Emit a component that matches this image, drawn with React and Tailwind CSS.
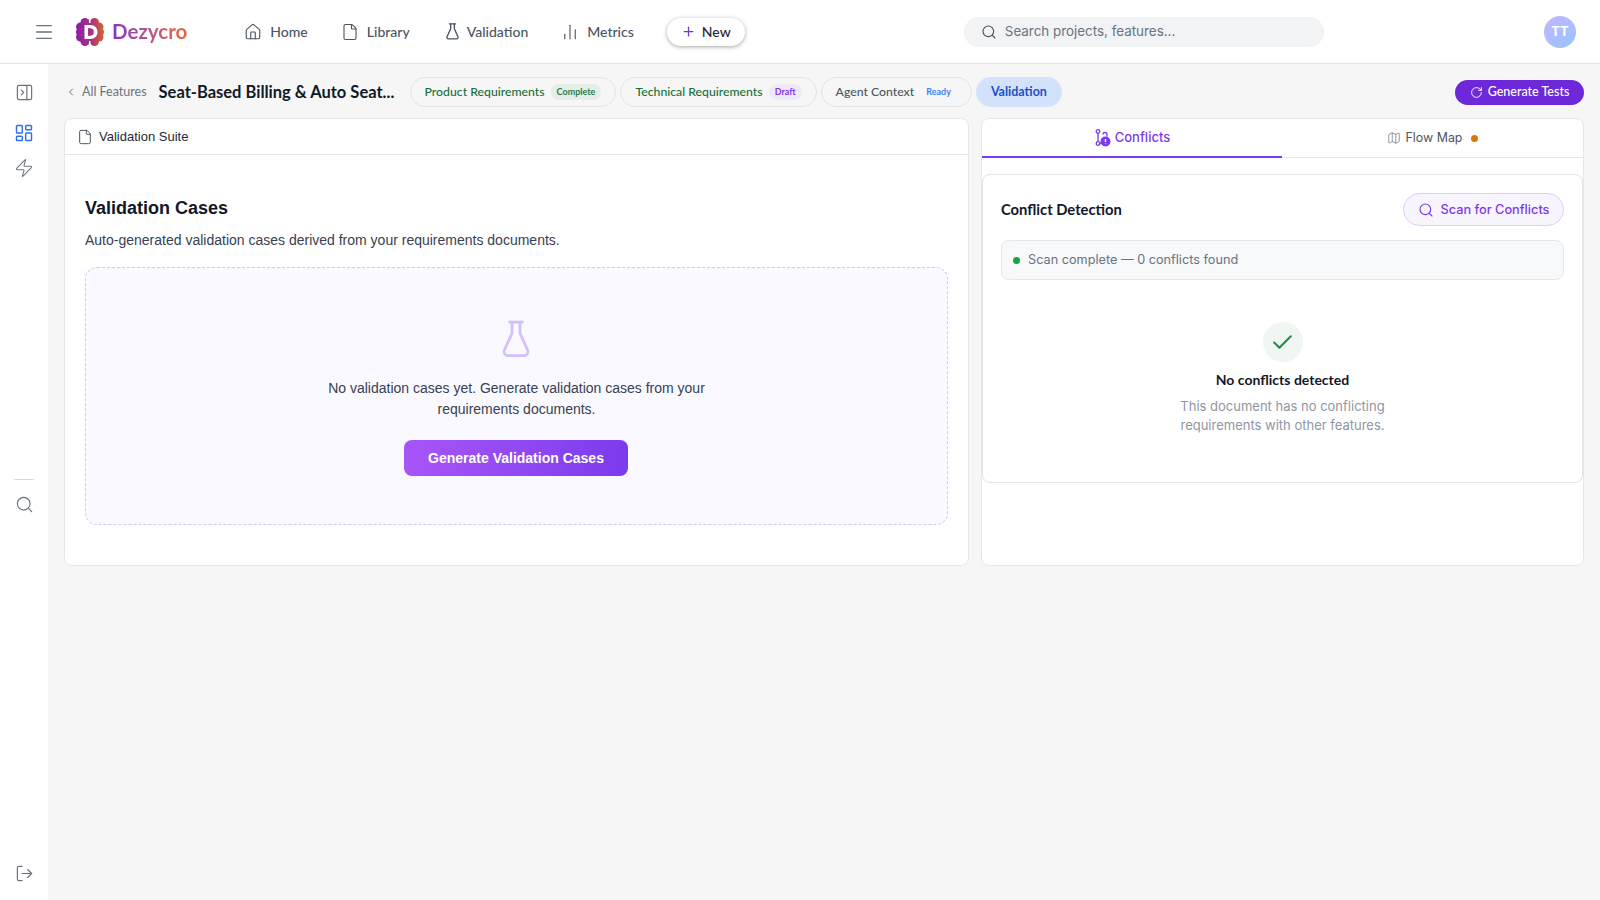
import {
  Menu, House, File, ChartNoAxesColumn, Plus, Search, ChevronLeft, RotateCw,
  PanelRightClose, LayoutDashboard, Zap, LogOut, Map as MapIcon, Check,
} from 'lucide-react';

const JOST = "font-['Lato','Liberation_Sans',sans-serif]";
const DM = "font-['Inter','Liberation_Sans',sans-serif]";
const ARIAL = "font-['Liberation_Sans',Arial,sans-serif]";

const LOBES = [
  [9, 4.500, 4.500], [18.500, 4.500, 4.500], [4.500, 9, 4.500], [23, 9, 4.500], [3.500, 14, 3.500],
  [24.500, 14, 3.500], [4.500, 19, 4.500], [23, 19, 4.500], [9, 23.500, 4.500], [18.500, 23.500, 4.500], [14, 14, 11],
];

function Logo() {
  return (
    <svg width="28" height="28" viewBox="0 0 28 28" className="shrink-0">
      <defs>
        <linearGradient id="lg" gradientUnits="userSpaceOnUse" x1="0" y1="0" x2="28" y2="0">
          <stop offset="0" stopColor="#8a1fa8" />
          <stop offset="0.55" stopColor="#a8347f" />
          <stop offset="1" stopColor="#d9642c" />
        </linearGradient>
      </defs>
      {LOBES.map(([cx, cy, r]) => (
        <circle key={`${cx}-${cy}`} cx={cx} cy={cy} r={r} fill="url(#lg)" />
      ))}
      <path d="M13.750 0v5M13.750 23v5" stroke="#fff" strokeWidth="1.500" />
      <path fill="#fff" d="M8.500 7h6c4.200 0 7 2.900 7 7s-2.800 7-7 7h-6zm3.500 3.200v7.600h2.300c2.200 0 3.600-1.600 3.600-3.800s-1.400-3.800-3.600-3.800z" />
    </svg>
  );
}

function FlaskIcon({ width, height, strokeWidth, className }) {
  return (
    <svg width={width} height={height} viewBox="0 0 28 38" fill="none" stroke="currentColor" strokeWidth={strokeWidth} strokeLinecap="round" strokeLinejoin="round" preserveAspectRatio="none" className={className}>
      <path d="M18 2v10.500c0 .6.1 1.100.4 1.600l7.200 15.900c1 2.400-.4 5.500-3.200 5.500H5.600c-2.800 0-4.200-3.100-3.200-5.500l7.200-15.900c.3-.5.4-1 .4-1.600V2" />
      <path d="M7.500 2h13" />
    </svg>
  );
}

function ConflictIcon() {
  return (
    <svg width="16" height="18" viewBox="0 0 16 18" fill="none" stroke="#7c3aed" strokeWidth="1.300" className="shrink-0">
      <circle cx="3" cy="2.500" r="1.800" />
      <circle cx="3" cy="14.500" r="1.800" />
      <path d="M3 4.500v8" />
      <path d="M8 5.500a2 2 0 0 1 4 0v2" />
      <path d="M5 14.500c1 0 2-.5 2-2v-3" />
      <circle cx="10.500" cy="12.500" r="5" fill="#7c3aed" stroke="none" />
      <path d="M10.500 10v3M10.500 14.500v.5" stroke="#fff" strokeWidth="1.400" />
    </svg>
  );
}

function NavItem({ icon, label, className }) {
  return (
    <div className={`flex items-center gap-2 text-[#4b5563] ${className}`}>
      {icon}
      <span className={`${JOST} text-[14px] font-medium`}>{label}</span>
    </div>
  );
}

function Pill({ label, tag, tagClass, labelClass }) {
  return (
    <div className="flex h-[30px] items-center gap-[6px] rounded-full border border-[#e2e2e4] pl-[14px] pr-[14px]">
      <span className={`${JOST} text-[12.250px] font-medium ${labelClass}`}>{label}</span>
      <span className={`${JOST} rounded-full px-[6px] py-[1px] text-[9px] font-bold ${tagClass}`}>{tag}</span>
    </div>
  );
}

function Header() {
  return (
    <header className="flex h-[64px] shrink-0 items-center border-b border-[#e2e2e2] bg-white">
      <Menu size={22} strokeWidth={1.500} className="ml-[33px] text-[#6b7280]" />
      <div className="ml-[21px] flex items-center">
        <Logo />
        <span className={`${JOST} ml-[8px] bg-gradient-to-r from-[#8b2fc0] to-[#e8672a] bg-clip-text text-[20.500px] font-bold text-transparent`}>
          Dezycro
        </span>
      </div>
      <NavItem icon={<House size={18} strokeWidth={1.500} />} label="Home" className="ml-[57px]" />
      <NavItem icon={<File size={18} strokeWidth={1.500} />} label="Library" className="ml-[33px]" />
      <NavItem icon={<FlaskIcon width={13} height={17} strokeWidth={3} />} label="Validation" className="ml-[36px]" />
      <NavItem icon={<ChartNoAxesColumn size={18} strokeWidth={1.500} />} label="Metrics" className="ml-[33px]" />
      <button className="ml-[33px] flex h-[28px] w-[78px] items-center justify-center gap-[6px] rounded-full bg-white shadow-[0_1px_4px_rgba(0,0,0,0.35)]">
        <Plus size={15} strokeWidth={2} className="text-[#6d3ad9]" />
        <span className={`${JOST} text-[14px] font-medium text-[#1f2937]`}>New</span>
      </button>
      <div className="ml-[219px] flex h-[30px] w-[360px] items-center gap-[8px] rounded-full bg-[#f1f3f5] pl-[17px]">
        <Search size={16} strokeWidth={1.750} className="text-[#4b5563]" />
        <span className={`${DM} text-[13.400px] text-[#6b7280]`}>Search projects, features...</span>
      </div>
      <div className="ml-auto mr-[24px] flex h-[32px] w-[32px] items-center justify-center rounded-full bg-gradient-to-br from-[#c4b5fd] to-[#93c5fd]">
        <span className={`${DM} text-[13px] font-bold text-white`}>TT</span>
      </div>
    </header>
  );
}

function Sidebar() {
  return (
    <aside className="flex w-[48px] shrink-0 flex-col items-center bg-white pt-[19px] pb-[17px] text-[#6b7280]">
      <PanelRightClose size={19} strokeWidth={1.500} />
      <LayoutDashboard size={20} strokeWidth={1.750} className="mt-[21px] text-[#2f6fed]" />
      <Zap size={20} strokeWidth={1.250} className="mt-[15px]" />
      <div className="mt-[301px] h-px w-[20px] bg-[#d9d9d9]" />
      <Search size={19} strokeWidth={1.500} className="mt-[15px]" />
      <LogOut size={19} strokeWidth={1.500} className="mt-auto" />
    </aside>
  );
}

function SubBar() {
  return (
    <div className="flex h-[54px] shrink-0 items-center pt-[2px]">
      <ChevronLeft size={12} className="ml-[1px] text-[#6b7280]" />
      <span className={`${JOST} ml-[5px] text-[12.500px] text-[#6b7280]`}>All Features</span>
      <span className={`${JOST} ml-[12px] w-[238px] text-[16.500px] font-bold text-[#111827]`}>Seat-Based Billing &amp; Auto Seat...</span>
      <div className="ml-[13px] flex items-center gap-[4px]">
        <Pill label="Product Requirements" tag="Complete" labelClass="text-[#15703a]" tagClass="bg-[#e3efe7] text-[#2a7a4a]" />
        <Pill label="Technical Requirements" tag="Draft" labelClass="text-[#15703a]" tagClass="bg-[#efe9fb] text-[#7c3aed]" />
        <Pill label="Agent Context" tag="Ready" labelClass="text-[#4b5563]" tagClass="text-[#3b82f6]" />
        <div className={`${JOST} flex h-[30px] w-[86px] items-center justify-center rounded-full bg-[#d3e2fb] text-[12.500px] font-bold text-[#1d4fc4]`}>
          Validation
        </div>
      </div>
      <button className={`${JOST} ml-auto flex h-[25px] w-[129px] items-center justify-center gap-[5px] rounded-full bg-[#6d28d9] text-[12.500px] font-medium text-white`}>
        <RotateCw size={13} strokeWidth={1.750} />
        Generate Tests
      </button>
    </div>
  );
}

function ValidationPanel() {
  return (
    <section className={`${ARIAL} w-[905px] rounded-lg border border-[#e5e7eb] bg-white`}>
      <div className="flex h-[36px] items-center gap-[6px] border-b border-[#e5e7eb] pl-[12px]">
        <File size={16} strokeWidth={1.500} className="text-[#4b5563]" />
        <span className="text-[13px] text-[#1f2937]">Validation Suite</span>
      </div>
      <div className="px-[20px] pt-[41px]">
        <h2 className="text-[18px] leading-[24px] font-bold text-[#111827]">Validation Cases</h2>
        <p className="mt-[10px] text-[14px] leading-[20px] text-[#374151]">
          Auto-generated validation cases derived from your requirements documents.
        </p>
        <div className="mt-[17px] flex h-[258px] flex-col items-center rounded-xl border border-dashed border-[#d5c9f7] bg-[#faf9ff] pt-[52px]">
          <FlaskIcon width={28} height={38} strokeWidth={2.750} className="-ml-px text-[#d2bffc]" />
          <p className="mt-[20px] w-[400px] text-center text-[14px] leading-[21px] text-[#374151]">
            No validation cases yet. Generate validation cases from your requirements documents.
          </p>
          <button className="mt-[20px] -ml-px flex h-[36px] w-[224px] items-center justify-center rounded-lg bg-gradient-to-r from-[#a855f7] to-[#7c3aed] text-[14px] font-bold text-white">
            Generate Validation Cases
          </button>
        </div>
      </div>
    </section>
  );
}

function ConflictsPanel() {
  return (
    <section className="flex-1 rounded-lg border border-[#e5e7eb] bg-white">
      <div className="flex h-[39px] border-b border-[#e5e7eb]">
        <div className="-mb-px flex w-[300px] items-center justify-center gap-[4px] border-b-2 border-[#7c3aed] pl-[1px]">
          <ConflictIcon />
          <span className={`${DM} text-[13px] font-medium text-[#7c3aed]`}>Conflicts</span>
        </div>
        <div className="flex flex-1 items-center justify-center gap-[5px]">
          <MapIcon size={14} strokeWidth={1.250} className="text-[#6b7280]" />
          <span className={`${DM} text-[12.400px] text-[#4b5563]`}>Flow Map</span>
          <span className="ml-[4px] h-[7px] w-[7px] rounded-full bg-[#d97706]" />
        </div>
      </div>
      <div className="mt-[16px] h-[309px] rounded-lg border border-[#e2e3e6] bg-white px-[18px] pt-[18px]">
        <div className="flex items-center justify-between">
          <h3 className={`${JOST} -mt-px text-[14.750px] font-bold text-[#111827]`}>Conflict Detection</h3>
          <button className="flex h-[33px] w-[161px] items-center justify-center gap-[7px] rounded-full border border-[#dccdfa] bg-[#f8f5ff]">
            <Search size={16} strokeWidth={1.750} className="text-[#7c3aed]" />
            <span className={`${DM} text-[12.750px] font-medium text-[#7c3aed]`}>Scan for Conflicts</span>
          </button>
        </div>
        <div className="mt-[14px] flex h-[40px] items-center gap-[8px] rounded-lg border border-[#e5e7eb] bg-[#f8f9fb] pl-[11px]">
          <span className="h-[7px] w-[7px] rounded-full bg-[#16a34a]" />
          <span className={`${DM} text-[12.700px] text-[#6b7280]`}>Scan complete — 0 conflicts found</span>
        </div>
        <div className="mt-[42px] flex flex-col items-center">
          <div className="flex h-[40px] w-[40px] items-center justify-center rounded-full bg-[#f0f6f2]">
            <Check size={25} strokeWidth={2} className="text-[#1a8f45]" />
          </div>
          <h4 className={`${JOST} mt-[8px] text-[14px] leading-[20px] font-bold text-[#111827]`}>No conflicts detected</h4>
          <p className={`${DM} mt-[7px] w-[230px] text-center text-[13px] leading-[19px] text-[#8f96a3]`}>
            This document has no conflicting requirements with other features.
          </p>
        </div>
      </div>
    </section>
  );
}

export default function App() {
  return (
    <div className="flex h-[900px] w-[1600px] flex-col bg-white">
      <Header />
      <div className="flex min-h-0 flex-1">
        <Sidebar />
        <main className="flex-1 bg-[#f6f6f6] px-[16px]">
          <SubBar />
          <div className="flex h-[448px] gap-[12px]">
            <ValidationPanel />
            <ConflictsPanel />
          </div>
        </main>
      </div>
    </div>
  );
}
